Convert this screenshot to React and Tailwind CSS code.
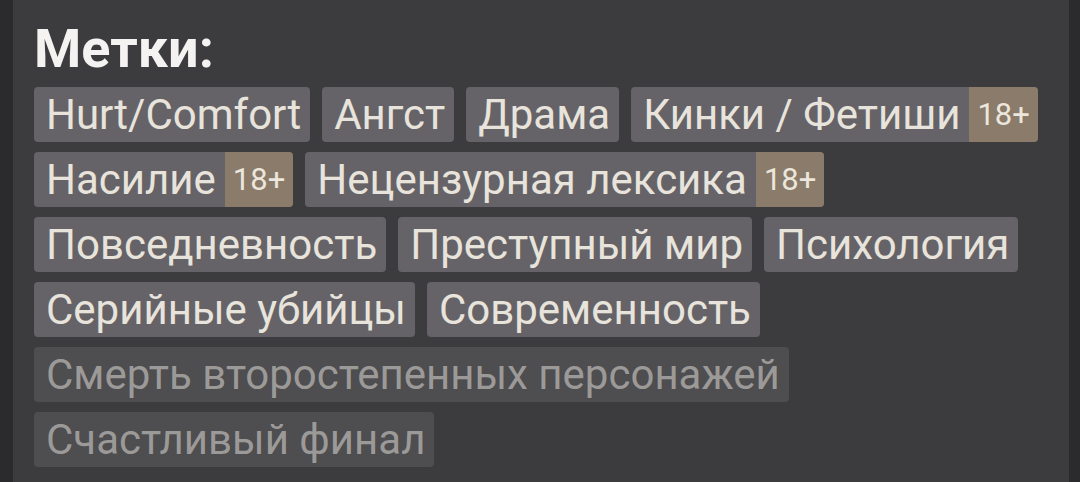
import React from "react";

const tags = [
  { name: "Hurt/Comfort" },
  { name: "Ангст" },
  { name: "Драма" },
  { name: "Кинки / Фетиши", adult: true },
  { name: "Насилие", adult: true },
  { name: "Нецензурная лексика", adult: true },
  { name: "Повседневность" },
  { name: "Преступный мир" },
  { name: "Психология" },
  { name: "Серийные убийцы" },
  { name: "Современность" },
  { name: "Смерть второстепенных персонажей", minor: true },
  { name: "Счастливый финал", minor: true },
];

const Tag = ({ name, adult, minor }) => (
  <span
    className={`flex h-[55px] items-stretch overflow-hidden rounded-[4px] text-[42px] leading-[55px] ${
      minor ? "bg-[#4e4d4f] text-[#9c9a98]" : "bg-[#656368] text-[#e8e4dc]"
    }`}
  >
    <span className="pl-[12px] pr-[9px]">{name}</span>
    {adult && (
      <span className="bg-[#8a7b6a] px-[8px] text-[31px] text-[#ece6dc]">18+</span>
    )}
  </span>
);

export default function App() {
  return (
    <div className="flex h-[482px] w-[1080px] bg-[#2b2a2c] font-['Roboto',sans-serif]">
      <div className="ml-[13px] mr-[11px] flex-1 bg-[#3c3b3d] pl-[21px] pr-[10px] pt-[22px]">
        <h2 className="mb-[11px] text-[54px] font-bold leading-[54px] text-[#f4f3f2]">
          Метки:
        </h2>
        <div className="flex flex-wrap gap-x-[12px] gap-y-[10px]">
          {tags.map((t) => (
            <Tag key={t.name} {...t} />
          ))}
        </div>
      </div>
    </div>
  );
}
